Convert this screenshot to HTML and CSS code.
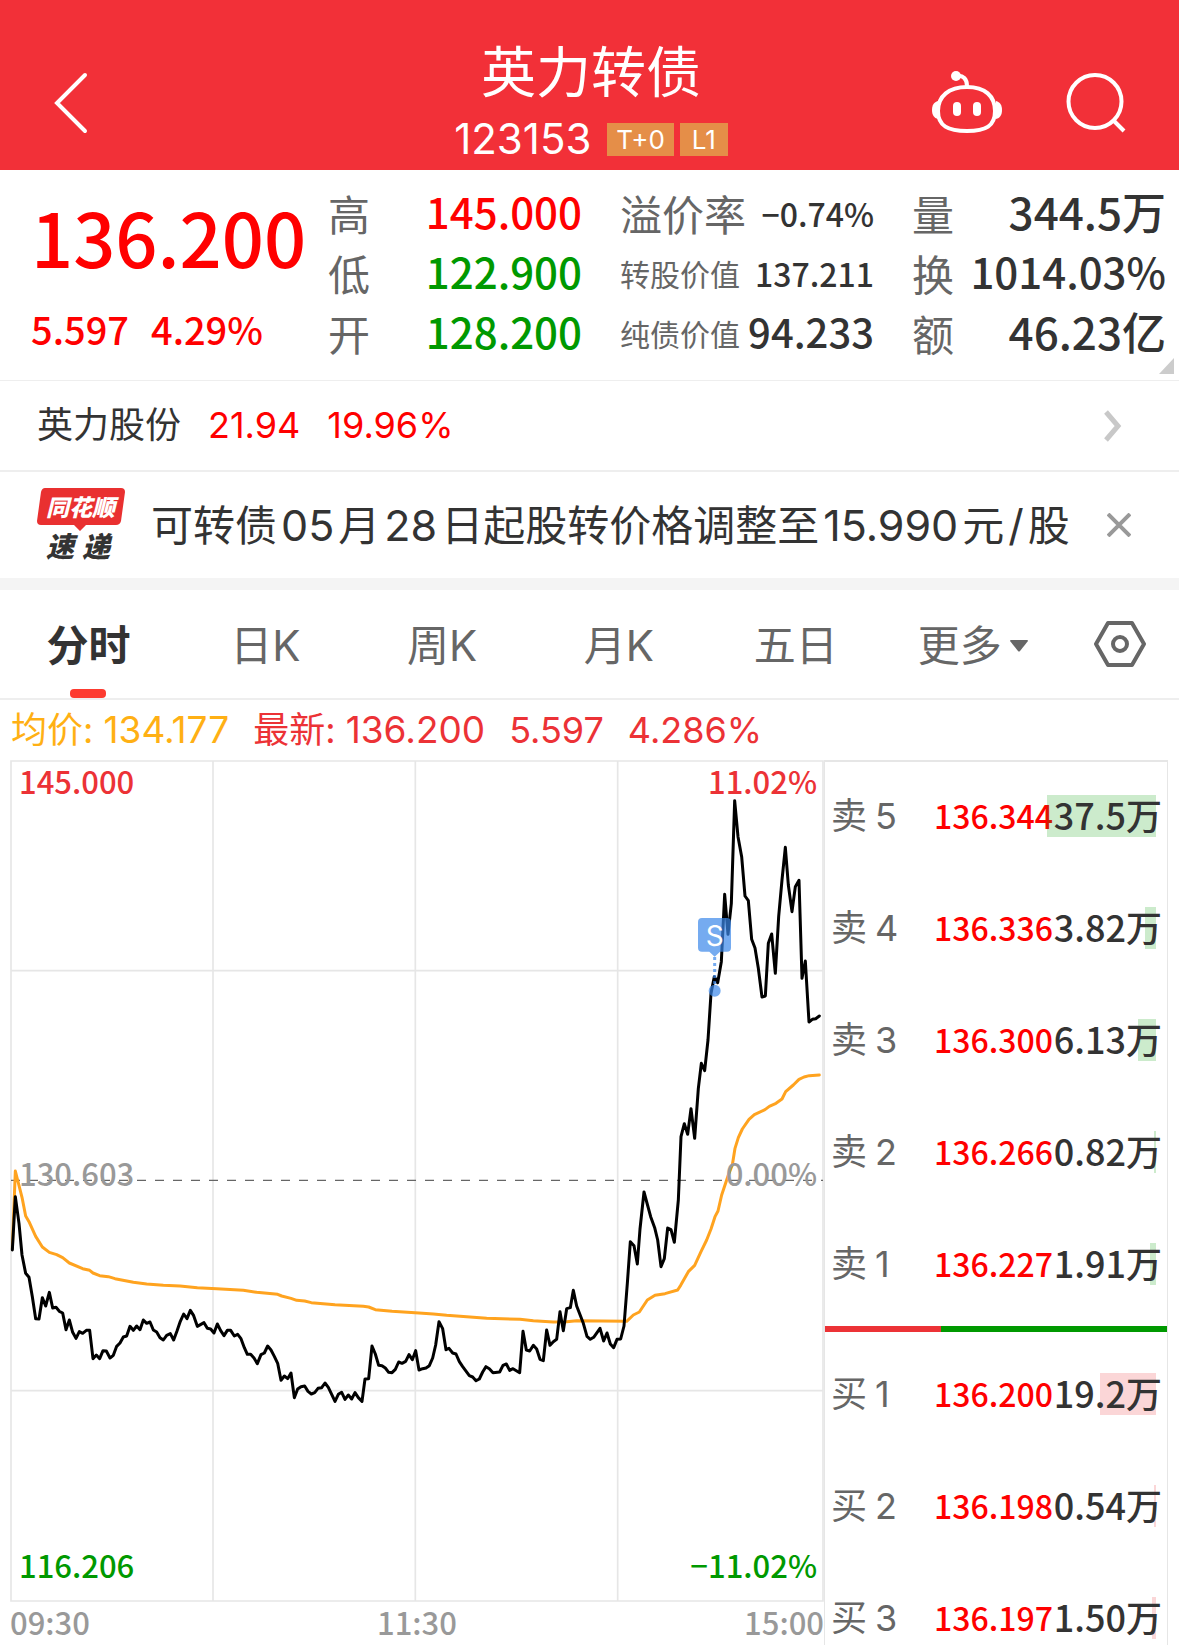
FILE: index.html
```html
<!DOCTYPE html>
<html lang="zh-CN">
<head>
  <meta charset="UTF-8">
  <meta name="viewport" content="width=device-width, initial-scale=1.0">
  <link rel="stylesheet" href="styles.css">
  <title>英力转债 123153</title>
</head>
<body>
  <header class="header">
    <button class="icon-btn back" aria-label="返回">
      <svg width="36" height="62" viewBox="0 0 36 62"><path d="M33 3 L5 31 L33 59" fill="none" stroke="#fff" stroke-width="4" stroke-linecap="round"/></svg>
    </button>
    <div class="title">
      <h1>英力转债</h1>
      <p class="code">123153 <span class="badge">T+0</span><span class="badge">L1</span></p>
    </div>
    <div class="actions">
      <button class="icon-btn" aria-label="智能助手">
        <svg width="72" height="64" viewBox="0 0 72 64">
          <g fill="none" stroke="#fff" stroke-width="4" stroke-linecap="round">
            <path d="M35 16 C53 16 63 25 63 40 C63 55 54 60 35 60 C16 60 6 55 6 40 C6 25 17 16 35 16 Z"/>
            <path d="M25 5 C31 4 35 8 35 15"/>
          </g>
          <g fill="#fff">
            <circle cx="24" cy="5" r="5"/>
            <rect x="21" y="31" width="8" height="14" rx="4"/>
            <rect x="41" y="31" width="8" height="14" rx="4"/>
            <path d="M6 30 C2 31 0 34 0 39 C0 44 2 47 6 48 Z"/>
            <path d="M64 30 C68 31 70 34 70 39 C70 44 68 47 64 48 Z"/>
          </g>
        </svg>
      </button>
      <button class="icon-btn" aria-label="搜索">
        <svg width="62" height="62" viewBox="0 0 62 62"><g fill="none" stroke="#fff" stroke-width="4"><circle cx="30" cy="29.5" r="26.5"/><path d="M48 48 L59 59"/></g></svg>
      </button>
    </div>
  </header>

  <section class="quote">
    <div class="price">
      <strong class="last">136.200</strong>
      <p class="change"><span>5.597</span><span>4.29%</span></p>
    </div>
    <dl class="stats range">
      <dt>高</dt><dd class="up">145.000</dd>
      <dt>低</dt><dd class="down">122.900</dd>
      <dt>开</dt><dd class="down">128.200</dd>
    </dl>
    <dl class="stats bond">
      <dt>溢价率</dt><dd class="small">−0.74%</dd>
      <dt class="small">转股价值</dt><dd class="small">137.211</dd>
      <dt class="small">纯债价值</dt><dd class="medium">94.233</dd>
    </dl>
    <dl class="stats volume">
      <dt>量</dt><dd class="large">344.5万</dd>
      <dt>换</dt><dd>1014.03%</dd>
      <dt>额</dt><dd class="large">46.23亿</dd>
    </dl>
    <span class="corner"></span>
  </section>

  <a class="stock" href="#">
    <span class="stock-name">英力股份</span>
    <span>21.94</span>
    <span>19.96%</span>
    <svg class="arrow" width="20" height="32" viewBox="0 0 20 32"><path d="M3 2 L15 16 L3 30" fill="none" stroke="#c8c8c8" stroke-width="5"/></svg>
  </a>

  <section class="news">
    <svg class="logo" width="88" height="74" viewBox="0 0 88 74">
      <path d="M8 0 H84 Q88 0 88 4 L84 33 Q83 37 79 37 H49 L43 43 L37 37 H4 Q0 37 0 33 L4 4 Q5 0 8 0 Z" fill="#e93030"/>
      <text class="logo-top" x="9" y="28">同花顺</text>
      <text class="logo-bottom" x="9" y="69">速</text>
      <text class="logo-bottom" x="45" y="69">递</text>
    </svg>
    <a class="news-text" href="#">可转债<span class="num">05</span>月<span class="num">28</span>日起股转价格调整至<span class="num">15.990</span>元<span class="num">/</span>股</a>
    <button class="icon-btn close" aria-label="关闭">
      <svg width="24" height="24" viewBox="0 0 24 24"><path d="M1 1 L23 23 M23 1 L1 23" fill="none" stroke="#999" stroke-width="4"/></svg>
    </button>
  </section>

  <nav class="tabs">
    <button class="tab active">分时</button>
    <button class="tab">日K</button>
    <button class="tab">周K</button>
    <button class="tab">月K</button>
    <button class="tab">五日</button>
    <button class="tab more">更多<svg width="18" height="12" viewBox="0 0 18 12"><path d="M1 0 H17 Q18 0 18 1 L10 11 Q9 12 8 11 L0 1 Q0 0 1 0 Z" fill="#666"/></svg></button>
    <button class="tab settings" aria-label="设置">
      <svg width="52" height="46" viewBox="0 0 52 46"><g fill="none" stroke="#666" stroke-width="4"><path d="M14 2 H38 L50 23 L38 44 H14 L2 23 Z" stroke-linejoin="round"/><circle cx="26" cy="23" r="7"/></g></svg>
    </button>
  </nav>

  <p class="summary">
    <span class="avg">均价: <span class="num">134.177</span></span>
    <span>最新: <span class="num">136.200</span></span>
    <span>5.597</span>
    <span>4.286%</span>
  </p>

  <main class="board">
    <section class="chart">
      <div class="plot">
        <!-- three units to the pixel -->
        <svg class="lines" viewBox="30 0 2442 2526">
          <g fill="none" stroke="#e6e6e6" stroke-width="5">
            <path d="M33 3 H2469 V2523 H33 Z"/>
            <path d="M639 3 V2523 M1246 3 V2523 M1853 3 V2523 M33 632 H2469 M33 1892 H2469"/>
          </g>
          <path d="M33 1261 H2469" stroke="#666" stroke-width="4" stroke-dasharray="27 27"/>
          <g fill="none" stroke-width="9" stroke-linejoin="round" stroke-linecap="round">
            <polyline stroke="#ffa31f" points="37,1465 46,1233 66,1312 77,1368 87,1385 107,1429 127,1461 148,1477 170,1484 188,1493 208,1509 248,1526 269,1531 279,1539 299,1547 325,1550 345,1556 400,1567 440,1572 490,1576 540,1578 592,1583 650,1586 730,1591 770,1597 833,1603 845,1608 873,1615 890,1621 914,1623 934,1628 1005,1634 1090,1639 1106,1641 1126,1649 1176,1654 1257,1659 1300,1662 1340,1666 1460,1675 1560,1678 1600,1682 1660,1686 1700,1685 1730,1682 1880,1684 1900,1665 1918,1656 1942,1620 1965,1606 1995,1601 2033,1590 2042,1576 2065,1535 2084,1516 2103,1475 2120,1440 2133,1407 2145,1370 2154,1353 2165,1305 2185,1245 2197,1215 2205,1165 2215,1133 2227,1107 2247,1078 2263,1064 2295,1049 2308,1039 2328,1030 2346,1017 2357,995 2380,975 2397,958 2412,951 2428,947 2458,945"/>
            <polyline stroke="#000" points="37,1470 46,1310 57,1390 66,1485 77,1540 87,1552 97,1610 107,1676 117,1677 127,1613 137,1638 148,1597 158,1644 168,1642 178,1654 188,1659 198,1709 208,1680 218,1717 228,1735 238,1715 248,1720 259,1711 269,1711 279,1796 289,1785 299,1796 309,1772 319,1773 330,1794 340,1786 350,1759 360,1749 370,1731 380,1728 390,1699 400,1711 410,1698 420,1709 430,1680 440,1690 450,1686 460,1710 470,1716 480,1733 490,1740 500,1726 511,1721 521,1740 531,1713 541,1684 551,1662 561,1676 571,1651 581,1667 592,1699 612,1688 622,1705 632,1707 642,1719 652,1692 662,1712 672,1727 682,1711 692,1711 703,1728 713,1723 723,1736 733,1763 742,1783 752,1783 762,1794 772,1811 783,1784 793,1779 803,1758 813,1770 823,1789 833,1810 843,1861 853,1848 863,1856 873,1839 883,1913 893,1887 903,1880 914,1878 924,1894 934,1902 944,1898 954,1885 965,1883 975,1869 985,1882 995,1903 1005,1924 1015,1903 1025,1897 1035,1918 1045,1905 1055,1917 1065,1898 1075,1913 1086,1924 1095,1857 1106,1856 1116,1758 1126,1782 1136,1816 1146,1817 1156,1824 1166,1837 1176,1838 1186,1828 1196,1806 1206,1810 1217,1804 1227,1784 1237,1799 1247,1772 1257,1830 1268,1826 1278,1824 1288,1817 1298,1794 1307,1755 1317,1685 1328,1706 1338,1769 1347,1765 1358,1779 1368,1782 1378,1805 1388,1820 1408,1847 1418,1851 1428,1862 1438,1857 1448,1836 1458,1820 1468,1826 1479,1838 1499,1836 1509,1816 1519,1812 1529,1831 1539,1826 1559,1838 1569,1714 1579,1770 1589,1773 1600,1756 1610,1767 1620,1798 1630,1802 1640,1710 1650,1756 1660,1745 1670,1738 1680,1655 1690,1712 1700,1646 1711,1643 1720,1591 1730,1638 1750,1690 1761,1729 1771,1738 1781,1732 1800,1705 1811,1743 1821,1719 1831,1752 1841,1763 1851,1738 1862,1737 1872,1698 1882,1570 1891,1445 1902,1457 1912,1512 1920,1407 1932,1296 1952,1370 1964,1403 1973,1440 1983,1520 1993,1496 2003,1404 2013,1409 2023,1447 2035,1320 2043,1130 2053,1091 2063,1123 2073,1046 2084,1135 2095,985 2104,910 2114,932 2124,840 2133,700 2143,650 2153,668 2164,605 2174,403 2184,523 2194,430 2204,122 2214,230 2225,290 2235,408 2245,422 2255,538 2265,564 2275,625 2286,711 2296,708 2305,550 2315,522 2326,640 2336,470 2346,360 2356,262 2365,375 2376,455 2386,380 2397,361 2406,655 2416,603 2427,786 2437,778 2447,776 2458,768"/>
          </g>
          <g fill="#3b88ea" opacity="0.7">
            <path d="M2106 474 H2181 Q2193 474 2193 486 V563 Q2193 575 2181 575 H2160 L2144 590 L2128 575 H2106 Q2094 575 2094 563 V486 Q2094 474 2106 474 Z"/>
            <path d="M2144 591 V672" stroke="#3b88ea" stroke-width="9" stroke-dasharray="9 9"/>
            <circle cx="2144" cy="692" r="18"/>
          </g>
          <text class="mark" x="2144" y="557" text-anchor="middle">S</text>
        </svg>
        <span class="axis top left red">145.000</span>
        <span class="axis top right red">11.02%</span>
        <span class="axis middle left">130.603</span>
        <span class="axis middle right">0.00%</span>
        <span class="axis bottom left green">116.206</span>
        <span class="axis bottom right green">−11.02%</span>
      </div>
      <div class="times"><span>09:30</span><span>11:30</span><span>15:00</span></div>
    </section>

    <section class="book">
      <table class="sell">
        <tr><th>卖<span>5</span></th><td>136.344</td><td class="qty"><i style="width: 109px"></i><b>37.5万</b></td></tr>
        <tr><th>卖<span>4</span></th><td>136.336</td><td class="qty"><i style="width: 11px"></i><b>3.82万</b></td></tr>
        <tr><th>卖<span>3</span></th><td>136.300</td><td class="qty"><i style="width: 18px"></i><b>6.13万</b></td></tr>
        <tr><th>卖<span>2</span></th><td>136.266</td><td class="qty"><i style="width: 2px"></i><b>0.82万</b></td></tr>
        <tr><th>卖<span>1</span></th><td>136.227</td><td class="qty"><i style="width: 6px"></i><b>1.91万</b></td></tr>
      </table>
      <div class="ratio"><i style="width: 34%"></i></div>
      <table class="buy">
        <tr><th>买<span>1</span></th><td>136.200</td><td class="qty"><i style="width: 56px"></i><b>19.2万</b></td></tr>
        <tr><th>买<span>2</span></th><td>136.198</td><td class="qty"><i style="width: 2px"></i><b>0.54万</b></td></tr>
        <tr><th>买<span>3</span></th><td>136.197</td><td class="qty"><i style="width: 4px"></i><b>1.50万</b></td></tr>
      </table>
    </section>
  </main>
</body>
</html>
```
FILE: styles.css
```css
* {
  box-sizing: border-box;
}

body {
  margin: 0;
  height: 100vh;
  overflow: hidden;
  background: #fff;
  color: #333;
  font-family: Inter, "Noto Sans CJK SC", sans-serif;
  font-size: 36px;
  line-height: 1.2;
}

h1, p, dl, dd {
  margin: 0;
}

a {
  color: inherit;
  text-decoration: none;
}

button {
  padding: 0;
  border: none;
  background: none;
  color: inherit;
  font: inherit;
  cursor: pointer;
}

svg {
  display: block;
}

.header {
  display: grid;
  grid-template-columns: 1fr auto 1fr;
  align-items: center;
  height: 170px;
  padding: 36px 52px 0;
  background: #f23038;
  color: #fff;
}

.back {
  justify-self: start;
}

.title {
  padding-left: 3px;
  text-align: center;
}

.title h1 {
  font-size: 55px;
  font-weight: 400;
  line-height: 72px;
}

.code {
  display: flex;
  align-items: center;
  justify-content: center;
  gap: 6px;
  height: 34px;
  margin: 14px 0;
  font-size: 42px;
}

.badge {
  min-width: 48px;
  height: 33px;
  padding: 0 9px;
  background: #e58e48;
  font-size: 26px;
  line-height: 33px;
}

.badge:first-of-type {
  margin-left: 10px;
}

.actions {
  display: flex;
  align-items: center;
  justify-content: flex-end;
  gap: 61px;
}

.quote {
  position: relative;
  display: flex;
  height: 211px;
  padding: 13px 13px 0 31px;
  border-bottom: 1px solid #eee;
  font-family: "Noto Sans CJK SC", sans-serif;
}

.price {
  flex: 1;
  color: #f00;
}

.last {
  display: block;
  font-size: 74px;
  font-weight: 500;
  line-height: 106px;
}

.change {
  display: flex;
  gap: 22px;
  font-size: 38px;
  font-weight: 500;
  line-height: 80px;
}

.stats {
  display: grid;
  grid-template-columns: auto 1fr;
  grid-auto-rows: 60px;
  width: 254px;
  line-height: 60px;
  white-space: nowrap;
}

.bond,
.volume {
  margin-left: 38px;
}

.stats dt {
  color: #666;
  font-size: 42px;
}

.stats dd {
  font-size: 42px;
  font-weight: 500;
  line-height: 56px;
  text-align: right;
}

.stats dt.small {
  font-size: 30px;
}

.stats dd.small {
  font-size: 32px;
  line-height: 60px;
}

.stats dd.medium {
  font-size: 40px;
}

.stats dd.large {
  font-size: 44px;
}

.stats .up {
  color: #f00;
}

.stats .down {
  color: #090;
}

.corner {
  position: absolute;
  right: 5px;
  bottom: 6px;
  width: 15px;
  height: 16px;
  background: #ccc;
  clip-path: polygon(100% 0, 100% 100%, 0 100%);
}

.stock {
  display: flex;
  align-items: center;
  gap: 27px;
  height: 91px;
  padding: 0 56px 0 37px;
  border-bottom: 2px solid #eee;
  color: #f00;
}

.stock-name {
  color: #333;
}

.arrow {
  margin-left: auto;
}

.news {
  display: flex;
  align-items: center;
  height: 118px;
  padding: 0 48px 0 37px;
  border-bottom: 12px solid #f4f4f4;
}

.logo {
  overflow: visible;
}

.logo-top,
.logo-bottom {
  font-family: "Noto Sans CJK SC", sans-serif;
  font-style: italic;
  font-weight: 900;
}

.logo-top {
  fill: #fff;
  font-size: 23px;
}

.logo-bottom {
  fill: #333;
  font-size: 28px;
}

.news-text {
  padding-top: 2px;
  margin-left: 26px;
  font-size: 42px;
  white-space: nowrap;
}

.news-text .num {
  margin: 0 4px;
  font-size: 43px;
}

.close {
  margin-left: auto;
}

.tabs {
  display: grid;
  grid-template-columns: repeat(6, 15%) 10%;
  height: 110px;
  border-bottom: 2px solid #eee;
  color: #666;
}

.tab {
  position: relative;
  display: flex;
  align-items: center;
  justify-content: center;
  padding-top: 4px;
  font-size: 42px;
}

.settings {
  padding-top: 0;
}

.active {
  color: #333;
  font-weight: 700;
}

.active::after {
  content: "";
  position: absolute;
  bottom: 0;
  left: 50%;
  width: 36px;
  height: 9px;
  margin-left: -18px;
  border-radius: 4px;
  background: #fd3b30;
}

.more {
  gap: 8px;
}

.summary {
  display: flex;
  gap: 24px;
  padding-left: 11px;
  color: #ec3236;
  line-height: 60px;
}

.summary .num {
  font-size: 37px;
}

.avg {
  color: #ffb014;
}

.board {
  display: flex;
  align-items: flex-start;
  padding: 0 11px 0 10px;
}

.chart {
  flex: 1;
}

.plot {
  position: relative;
}

.lines {
  width: 100%;
}

.mark {
  fill: #fff;
  font-size: 84px;
}

.axis {
  position: absolute;
  color: #999;
  font-family: "Noto Sans CJK SC", sans-serif;
  font-size: 31px;
  font-weight: 500;
  line-height: 40px;
}

.left {
  left: 9px;
}

.right {
  right: 7px;
}

.top {
  top: 1px;
}

.middle {
  top: 393px;
}

.bottom {
  bottom: 17px;
}

.red {
  color: #ec3236;
}

.green {
  color: #090;
}

.times {
  display: flex;
  justify-content: space-between;
  color: #999;
  font-family: "Noto Sans CJK SC", sans-serif;
  font-size: 31px;
  font-weight: 500;
  line-height: 40px;
}

.book {
  width: 344px;
  border: 2px solid #e6e6e6;
  border-width: 2px 1px 0 1px;
  font-family: "Noto Sans CJK SC", sans-serif;
}

.book table {
  width: 100%;
  border-collapse: collapse;
  white-space: nowrap;
}

.book tr {
  height: 112px;
}

.book th,
.book td {
  padding: 0 0 6px;
  font-weight: 500;
}

.book th {
  padding-left: 6px;
  color: #666;
  font-weight: 400;
  text-align: left;
}

.book th span {
  margin-left: 8px;
  font-family: Inter, sans-serif;
}

.book td {
  width: 120px;
  color: #f00;
  font-size: 32px;
  text-align: right;
}

.book .qty {
  position: relative;
  width: 114px;
  padding-right: 5px;
  color: #333;
  font-size: 36px;
}

.qty i {
  position: absolute;
  top: 33px;
  right: 11px;
  height: 42px;
  background: rgba(0, 153, 0, 0.2);
}

.buy .qty i {
  background: rgba(233, 48, 54, 0.2);
}

.qty b {
  position: relative;
  font-weight: 500;
}

.ratio {
  height: 6px;
  margin: 4px 0 8px;
  background: #090;
}

.ratio i {
  display: block;
  height: 6px;
  background: #ec3236;
}
```
